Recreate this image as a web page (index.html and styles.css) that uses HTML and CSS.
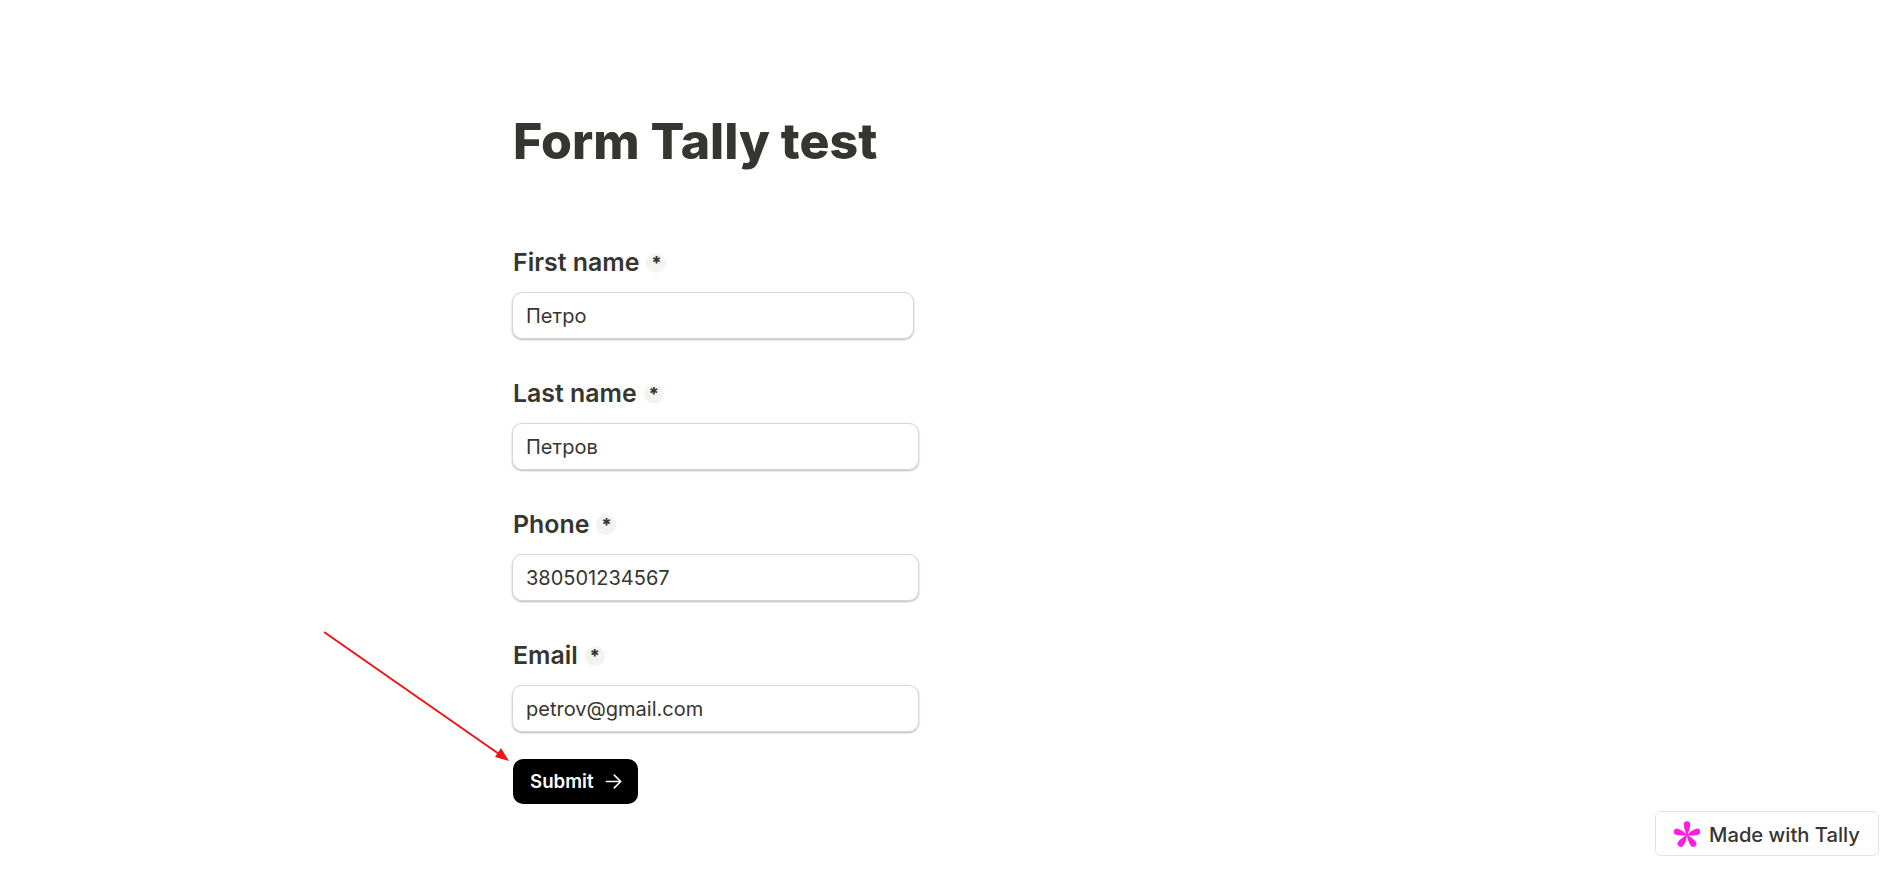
FILE: index.html
```html
<!DOCTYPE html>
<html lang="en">
<head>
    <meta charset="UTF-8">
    <meta name="viewport" content="width=device-width, initial-scale=1.0">
    <title>Form Tally test</title>
    <link rel="stylesheet" href="styles.css">
</head>
<body>

<main class="form-page">
    <h1 class="form-title">Form Tally test</h1>

    <form class="tally-form">
        <div class="field">
            <label class="field-label" for="firstName">First name <span class="required">*</span></label>
            <input class="field-input field-input-short" type="text" id="firstName" value="Петро">
        </div>
        <div class="field">
            <label class="field-label" for="lastName">Last name <span class="required">*</span></label>
            <input class="field-input" type="text" id="lastName" value="Петров">
        </div>
        <div class="field">
            <label class="field-label" for="phone">Phone <span class="required">*</span></label>
            <input class="field-input" type="text" id="phone" value="380501234567">
        </div>
        <div class="field">
            <label class="field-label" for="email">Email <span class="required">*</span></label>
            <input class="field-input" type="text" id="email" value="petrov@gmail.com">
        </div>
        <button class="submit-button" type="button">
            Submit
            <svg class="submit-arrow" viewBox="0 0 24 24" fill="none" stroke="currentColor" stroke-width="2" stroke-linecap="round" stroke-linejoin="round">
                <path d="M3 12h18"/>
                <path d="M13 4l8 8-8 8"/>
            </svg>
        </button>
    </form>
</main>

<!-- red annotation arrow drawn over the page -->
<svg class="annotation" viewBox="0 0 200 140">
    <path d="M1 1L176 123" stroke="#f01414" stroke-width="2" fill="none"/>
    <path d="M186 130L172 126L178 117Z" fill="#f01414"/>
</svg>

<a class="tally-badge" href="#">
    <svg class="tally-logo" viewBox="0 0 26 26" fill="#ff1ee0">
        <path d="M13 15C11.2 10 9.6 6.4 9.8 3.4A3.2 3.2 0 0 1 16.2 3.4C16.4 6.4 14.8 10 13 15Z"/>
        <path d="M13 15C11.2 10 9.6 6.4 9.8 3.4A3.2 3.2 0 0 1 16.2 3.4C16.4 6.4 14.8 10 13 15Z" transform="rotate(72 13 14)"/>
        <path d="M13 15C11.2 10 9.6 6.4 9.8 3.4A3.2 3.2 0 0 1 16.2 3.4C16.4 6.4 14.8 10 13 15Z" transform="rotate(144 13 14)"/>
        <path d="M13 15C11.2 10 9.6 6.4 9.8 3.4A3.2 3.2 0 0 1 16.2 3.4C16.4 6.4 14.8 10 13 15Z" transform="rotate(216 13 14)"/>
        <path d="M13 15C11.2 10 9.6 6.4 9.8 3.4A3.2 3.2 0 0 1 16.2 3.4C16.4 6.4 14.8 10 13 15Z" transform="rotate(288 13 14)"/>
    </svg>
    Made with Tally
</a>

</body>
</html>
```

FILE: styles.css
```css
body {
    font-family: Inter, "Noto Sans", sans-serif;
    margin: 0;
    padding: 0;
    background-color: white;
    color: #37352f;
    height: 873px;
    overflow: hidden;
}
.form-page {
    width: 407px;
    margin-left: 512px;
    padding-top: 112px;
}
.form-title {
    font-size: 50px;
    line-height: 58px;
    font-weight: 800;
    margin: 0 0 74px 1px;
}
.field {
    display: flex;
    flex-direction: column;
    align-items: flex-start;
    margin-bottom: 36px;
}
.field:last-of-type {
    margin-bottom: 27px;
}
.field-label {
    display: flex;
    align-items: center;
    gap: 7px;
    font-size: 24.9px;
    line-height: 34px;
    font-weight: 600;
    margin: 0 0 12px 1px;
    height: 36px;
}
.required {
    display: flex;
    align-items: center;
    justify-content: center;
    width: 20px;
    height: 20px;
    margin-top: 2px;
    border-radius: 50%;
    background-color: #f3f3f2;
    font-size: 18px;
    font-weight: 800;
    line-height: 24px;
}
.field-input {
    box-sizing: border-box;
    width: 407px;
    height: 47px;
    padding: 0 13px;
    border: 1px solid #d8d7d5;
    border-radius: 10px;
    box-shadow: 0 1px 2px rgba(0, 0, 0, 0.28);
    font-family: inherit;
    font-size: 20px;
    color: #37352f;
    background: white;
}
.field-input-short {
    width: 402px;
}
.submit-button {
    display: flex;
    align-items: center;
    gap: 10px;
    box-sizing: border-box;
    width: 125px;
    height: 45px;
    margin: 0 0 0 1px;
    padding: 0 17px;
    border: none;
    border-radius: 10px;
    background-color: black;
    color: white;
    font-family: inherit;
    font-size: 18.7px;
    font-weight: 600;
    white-space: nowrap;
}
.submit-arrow {
    width: 19px;
    height: 19px;
    flex: none;
}
.annotation {
    position: absolute;
    left: 323px;
    top: 631px;
    width: 200px;
    height: 140px;
}
.tally-badge {
    position: absolute;
    left: 1655px;
    top: 811px;
    box-sizing: border-box;
    width: 224px;
    height: 45px;
    display: flex;
    align-items: center;
    gap: 9px;
    padding: 1px 0 0 18px;
    border: 1px solid #e3e3e2;
    border-radius: 6px;
    background: white;
    color: #37352f;
    font-size: 20.2px;
    font-weight: 500;
    text-decoration: none;
    white-space: nowrap;
}
.tally-logo {
    width: 26px;
    height: 26px;
    flex: none;
}
```
